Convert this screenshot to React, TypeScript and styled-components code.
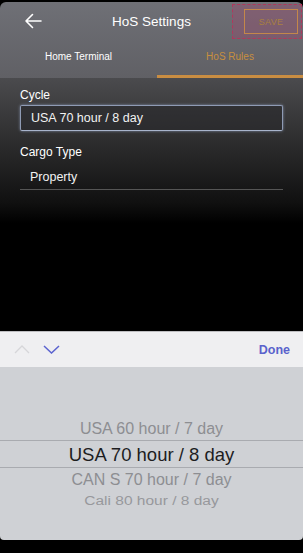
import styled, { createGlobalStyle } from 'styled-components';

const GlobalStyle = createGlobalStyle`
  html, body {
    margin: 0;
    padding: 0;
    background: #000;
  }
  body {
    font-family: "Liberation Sans", Arial, sans-serif;
  }
`;

const pickerItems = [
  { label: 'USA 60 hour / 7 day', level: 1 },
  { label: 'USA 70 hour / 8 day', level: 0 },
  { label: 'CAN S 70 hour / 7 day', level: 1 },
  { label: 'Cali 80 hour / 8 day', level: 2 },
];

export default function App(): JSX.Element {
  return (
    <>
      <GlobalStyle />
      <Screen>
        <TopArea>
          <NavBar>
            <BackButton aria-label="Back">
              <svg width="18" height="16" viewBox="0 0 18 16">
                <path
                  d="M17 8H2M8.5 1.5L2 8l6.5 6.5"
                  fill="none"
                  stroke="#fff"
                  strokeWidth="1.6"
                  strokeLinecap="round"
                  strokeLinejoin="round"
                />
              </svg>
            </BackButton>
            <Title>HoS Settings</Title>
            <SaveFrame>
              <SaveButton>SAVE</SaveButton>
            </SaveFrame>
          </NavBar>
          <Tabs>
            <Tab>Home Terminal</Tab>
            <Tab active>HoS Rules</Tab>
          </Tabs>
        </TopArea>

        <Content>
          <Field>
            <Label>Cycle</Label>
            <InputBox focused>USA 70 hour / 8 day</InputBox>
          </Field>
          <Field>
            <Label>Cargo Type</Label>
            <InputBox>Property</InputBox>
          </Field>
        </Content>

        <Toolbar>
          <Arrows>
            <svg width="16" height="9" viewBox="0 0 16 9">
              <path d="M1 8l7-7 7 7" fill="none" stroke="#d6d6d9" strokeWidth="1.3" />
            </svg>
            <svg width="17" height="9" viewBox="0 0 17 9">
              <path d="M1 1l7.5 7 7.5-7" fill="none" stroke="#5b63cf" strokeWidth="1.5" />
            </svg>
          </Arrows>
          <DoneButton>Done</DoneButton>
        </Toolbar>

        <Picker>
          <Wheel>
            {pickerItems.map((item) => (
              <WheelItem key={item.label} level={item.level}>
                {item.label}
              </WheelItem>
            ))}
          </Wheel>
        </Picker>
      </Screen>
    </>
  );
}

const Screen = styled.div`
  width: 303px;
  height: 553px;
  display: flex;
  flex-direction: column;
  background: #000;
  overflow: hidden;
`;

const TopArea = styled.div`
  margin-top: 2px;
  border-radius: 6px 6px 0 0;
  background: linear-gradient(#6f7076, #606065);
`;

const NavBar = styled.div`
  height: 38px;
  display: grid;
  grid-template-columns: 72px 1fr 72px;
  align-items: center;
`;

const BackButton = styled.div`
  padding-left: 24px;
  display: flex;
  align-items: center;
`;

const Title = styled.div`
  text-align: center;
  color: #fff;
  font-size: 13.5px;
`;

const SaveFrame = styled.div`
  width: 70px;
  height: 35px;
  margin-left: 1px;
  margin-top: 1px;
  box-sizing: border-box;
  border: 1px dashed #b0385c;
  background: rgba(160, 70, 110, 0.35);
  display: flex;
  align-items: center;
  justify-content: center;
`;

const SaveButton = styled.div`
  width: 54px;
  height: 25px;
  margin-left: 8px;
  box-sizing: border-box;
  border: 1px solid #c4874a;
  display: flex;
  align-items: center;
  justify-content: center;
  color: #a9803f;
  font-size: 9px;
  letter-spacing: 0.3px;
`;

const Tabs = styled.div`
  display: grid;
  grid-template-columns: 157px 1fr;
  height: 38px;
`;

const Tab = styled.div<{ active?: boolean }>`
  display: flex;
  align-items: center;
  justify-content: center;
  padding-bottom: 2px;
  font-size: 10px;
  color: ${({ active }) => (active ? '#c78f3e' : '#fff')};
  border-bottom: 3px solid ${({ active }) => (active ? '#c98d42' : 'transparent')};
`;

const Content = styled.div`
  flex: 1;
  padding: 10px 20px 0;
  display: flex;
  flex-direction: column;
  gap: 14px;
  background: linear-gradient(#4b4b4e 0px, #2a2a2b 70px, #101010 125px, #000 145px);
`;

const Field = styled.div`
  display: flex;
  flex-direction: column;
  gap: 3px;
`;

const Label = styled.div`
  color: #fff;
  font-size: 12px;
`;

const InputBox = styled.div<{ focused?: boolean }>`
  height: 26px;
  margin-top: ${({ focused }) => (focused ? '0' : '2px')};
  display: flex;
  align-items: center;
  padding-left: 10px;
  box-sizing: border-box;
  font-size: 12.5px;
  color: #f2f2f2;
  border: ${({ focused }) => (focused ? '1px solid #8f9bb4' : 'none')};
  border-bottom: 1px solid ${({ focused }) => (focused ? '#a8b4cc' : '#555')};
  border-radius: ${({ focused }) => (focused ? '2px' : '0')};
  box-shadow: ${({ focused }) => (focused ? '0 0 3px rgba(160, 175, 210, 0.7)' : 'none')};
  background: ${({ focused }) => (focused ? 'rgba(40, 40, 44, 0.6)' : 'transparent')};
`;

const Toolbar = styled.div`
  height: 35px;
  flex-shrink: 0;
  background: #efeff1;
  border-top: 1px solid #bdbdc0;
  display: flex;
  align-items: center;
  justify-content: space-between;
  padding: 0 13px 0 14px;
`;

const Arrows = styled.div`
  display: flex;
  align-items: center;
  gap: 13px;
`;

const DoneButton = styled.div`
  color: #5a62cc;
  font-size: 12.5px;
  font-weight: bold;
`;

const Picker = styled.div`
  height: 173px;
  flex-shrink: 0;
  margin-bottom: 13px;
  background: #cfd1d5;
  border-radius: 0 0 4px 4px;
  display: flex;
  flex-direction: column;
  padding-top: 50px;
  box-sizing: border-box;
`;

const Wheel = styled.div`
  display: flex;
  flex-direction: column;
  align-items: center;
`;

const WheelItem = styled.div<{ level: number }>`
  width: 100%;
  text-align: center;
  color: ${({ level }) => (level === 0 ? '#1d1d1f' : level === 1 ? '#8d8e92' : '#97989c')};
  font-size: ${({ level }) => (level === 0 ? '18.5px' : level === 1 ? '16px' : '15.5px')};
  height: ${({ level }) => (level === 0 ? '28px' : level === 1 ? '23px' : '20px')};
  line-height: ${({ level }) => (level === 0 ? '28px' : level === 1 ? '23px' : '20px')};
  box-sizing: border-box;
  border-top: ${({ level }) => (level === 0 ? '1px solid #a9abb0' : 'none')};
  border-bottom: ${({ level }) => (level === 0 ? '1px solid #a9abb0' : 'none')};
  transform: ${({ level }) => (level === 2 ? 'scaleY(0.82)' : 'none')};
`;
